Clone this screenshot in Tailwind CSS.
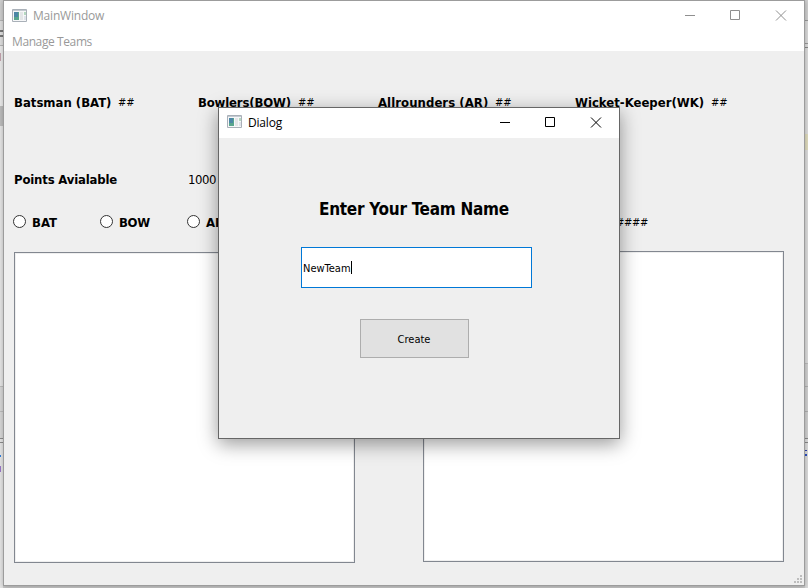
<!DOCTYPE html>
<html lang="en">
<head>
<meta charset="utf-8">
<title>MainWindow</title>
<script src="https://cdn.jsdelivr.net/npm/@tailwindcss/browser@4"></script>
</head>
<body class="flex h-[588px] w-[808px] overflow-hidden bg-[#cccccc] font-['DejaVu_Sans_Condensed','DejaVu_Sans',sans-serif] text-[13px] leading-4 text-black">
  <!-- strip of the window behind, left side -->
  <div class="relative flex h-full w-[3px] shrink-0 flex-col overflow-hidden bg-[#e6e6e6]">
    <div class="h-[21px] border-b border-[#b5b5b5] bg-[#cfcfcf]"></div>
    <div class="flex h-[25px] flex-col justify-center gap-[3px] border-b border-[#b5b5b5] bg-[#e0e0e0]"><i class="h-[2px] bg-[#777]"></i><i class="h-[2px] bg-[#777]"></i></div>
    <div class="h-[60px] bg-[#ececec] pt-[7px]"><i class="block h-2 w-px bg-[#c3a3ad]"></i></div>
    <div class="h-[20px] bg-[#bdbdbd]"></div>
    <div class="h-[261px] border-b border-[#bdbdbd] bg-[#e6e6e6]"></div>
    <div class="h-[25px] border-b border-[#bdbdbd] bg-[#d8d8d8]"></div>
    <div class="h-[27px] border-b border-[#8c8c8c] bg-[#d8d8d8]"></div>
    <div class="h-[4px] border-b border-[#8c8c8c]"></div>
    <i class="mt-[12px] block h-[2px] w-px bg-[#2c7fe0]"></i>
    <i class="mt-[9px] block h-[6px] w-px bg-[#9a78c8]"></i>
  </div>

  <main class="relative z-10 flex h-[586px] w-[802px] shrink-0 flex-col border border-[#9c9c9c] bg-[#efefef] shadow-[0_1px_5px_rgba(0,0,0,0.25)]">
    <header class="flex h-[50px] flex-col bg-white font-['Open_Sans','Noto_Sans',sans-serif] text-[12px] text-[#999]">
      <div class="flex h-[29px] items-center pl-2">
        <svg class="mb-px mr-[6px] h-[13px] w-[15px]" viewBox="0 0 15 13"><path fill="#f6f7f8" stroke="#a9b0b8" d="M.5.5h14v12H.5z"/><path stroke="#c4cad1" d="M1 1.5h13"/><path fill="#58a58c" d="M2 3h5v8H2z"/><path fill="#4c86a6" d="M2 3h4v5H2z"/><path fill="#e3e5e7" d="M8 3h3v8H8z"/><path fill="#b5d8c0" d="M12 3h2v3h-2z"/><path fill="#dfe3ea" d="M12 7h2v4h-2z"/></svg>
        <span class="pt-px tracking-[-0.2px]">MainWindow</span>
        <svg class="ml-auto mr-[17px] h-[11px] w-[102px]" viewBox="0 0 102 11" fill="none" stroke="#8f8f8f"><path d="M0 5.5h10M45.500.5h9v9h-9zM91 .5l10 10m0-10l-10 10"/></svg>
      </div>
      <div class="flex h-[21px] items-center pl-2 pt-[3px] tracking-[-0.4px]">Manage Teams</div>
    </header>

    <section class="mt-[44px] flex h-4 pl-[10px]">
      <div class="flex w-[184px]"><b class="w-[104px]">Batsman (BAT)</b><span class="text-[11px]">##</span></div>
      <div class="flex w-[180px]"><b class="w-[100px] tracking-[-0.17px]">Bowlers(BOW)</b><span class="text-[11px]">##</span></div>
      <div class="flex w-[197px]"><b class="w-[117px] tracking-[0.06px]">Allrounders (AR)</b><span class="text-[11px]">##</span></div>
      <div class="flex"><b class="w-[136px]">Wicket-Keeper(WK)</b><span class="text-[11px]">##</span></div>
    </section>
    <section class="mt-[61px] flex h-4 pl-[10px]"><b class="w-[174px] tracking-[-0.18px]">Points Avialable</b><span class="tracking-[-0.4px]">1000</span></section>
    <section class="mt-[26px] flex h-4 items-center pl-[9px]">
      <div class="flex w-[87px] items-center gap-[6px]"><i class="mb-px size-[13px] rounded-full border border-[#333] bg-white"></i><b class="pt-px">BAT</b></div>
      <div class="flex w-[87px] items-center gap-[6px]"><i class="mb-px size-[13px] rounded-full border border-[#333] bg-white"></i><b class="pt-px tracking-[-0.3px]">BOW</b></div>
      <div class="flex w-[87px] items-center gap-[6px]"><i class="mb-px size-[13px] rounded-full border border-[#333] bg-white"></i><b class="pt-px">AR</b></div>
      <span class="ml-auto mr-[156px] pt-px text-[11px] tracking-[-0.3px]">#####</span>
    </section>
    <section class="mt-[21px] flex items-start justify-between pl-[10px] pr-[20px]">
      <div class="mt-px h-[311px] w-[341px] border border-[#828790] bg-white shadow-[inset_0_0_0_1px_#efefef]"></div>
      <div class="h-[311px] w-[361px] border border-[#828790] bg-white shadow-[inset_0_0_0_1px_#efefef]"></div>
    </section>
    <svg class="mb-[2px] ml-auto mr-[2px] mt-auto h-2 w-2" viewBox="0 0 8 8" fill="#bdbdbd"><path d="M6 0h2v2H6zM3 3h2v2H3zM6 3h2v2H6zM0 6h2v2H0zM3 6h2v2H3zM6 6h2v2H6z"/></svg>
  </main>

  <!-- strip of the window behind, right side -->
  <div class="flex h-full w-[3px] shrink-0 flex-col bg-[#dcdcdc]">
    <div class="h-[21px] border-b border-[#999] bg-[#cfcfcf]"></div>
    <div class="h-[23px] border-b border-[#999] bg-[#dadada]"></div>
    <div class="h-[4px] border-b border-[#888]"></div>
    <div class="h-[86px]"></div>
    <div class="h-[16px] bg-[#dfdbbd]"></div>
    <div class="h-[214px] border-b border-[#bbb]"></div>
    <div class="h-[23px] border-b border-[#b0b0b0] bg-[#d0d0d0]"></div>
    <div class="h-[25px] border-b border-[#b0b0b0] bg-[#d0d0d0]"></div>
    <div class="h-[27px] border-b border-[#888] bg-[#d0d0d0]"></div>
    <div class="h-[4px] border-b border-[#888]"></div>
    <i class="mt-[7px] block h-px w-[2px] bg-[#2a3fae]"></i>
    <i class="mt-[3px] block h-[2px] w-[2px] bg-[#2c4fc0]"></i>
  </div>

  <div role="dialog" class="absolute left-[218px] top-[107px] z-20 flex h-[332px] w-[402px] flex-col border border-[#666] bg-[#efefef] shadow-[0_5px_18px_rgba(0,0,0,0.4)]">
    <div class="flex h-[30px] w-full items-center bg-white pl-2 font-['Open_Sans','Noto_Sans',sans-serif] text-[12px]">
      <svg class="mb-[3px] mr-[6px] h-[13px] w-[15px]" viewBox="0 0 15 13"><path fill="#f6f7f8" stroke="#a9b0b8" d="M.5.5h14v12H.5z"/><path stroke="#c4cad1" d="M1 1.5h13"/><path fill="#58a58c" d="M2 3h5v8H2z"/><path fill="#4c86a6" d="M2 3h4v5H2z"/><path fill="#e3e5e7" d="M8 3h3v8H8z"/><path fill="#b5d8c0" d="M12 3h2v3h-2z"/><path fill="#dfe3ea" d="M12 7h2v4h-2z"/></svg>
      <span class="tracking-[-0.2px]">Dialog</span>
      <svg class="mb-px ml-auto mr-[17px] h-[11px] w-[102px]" viewBox="0 0 102 11" fill="none" stroke="#000"><path d="M0 5.5h10M45.500.5h9v9h-9zM91 .5l10 10m0-10l-10 10"/></svg>
    </div>
    <h1 class="ml-[100px] mt-[61px] h-5 whitespace-nowrap text-[17px] font-bold leading-5 tracking-[-0.27px]">Enter Your Team Name</h1>
    <div class="ml-[82px] mt-[28px] flex h-[41px] w-[231px] items-center border border-[#0078d7] bg-white pl-px text-[11px]"><span class="pt-[2px]">NewTeam</span><i class="h-[13px] w-px bg-black"></i></div>
    <button class="ml-[141px] mt-[31px] h-[39px] w-[109px] border border-[#adadad] bg-[#e1e1e1] pr-px pt-[3px] text-[11px]">Create</button>
  </div>
</body>
</html>
